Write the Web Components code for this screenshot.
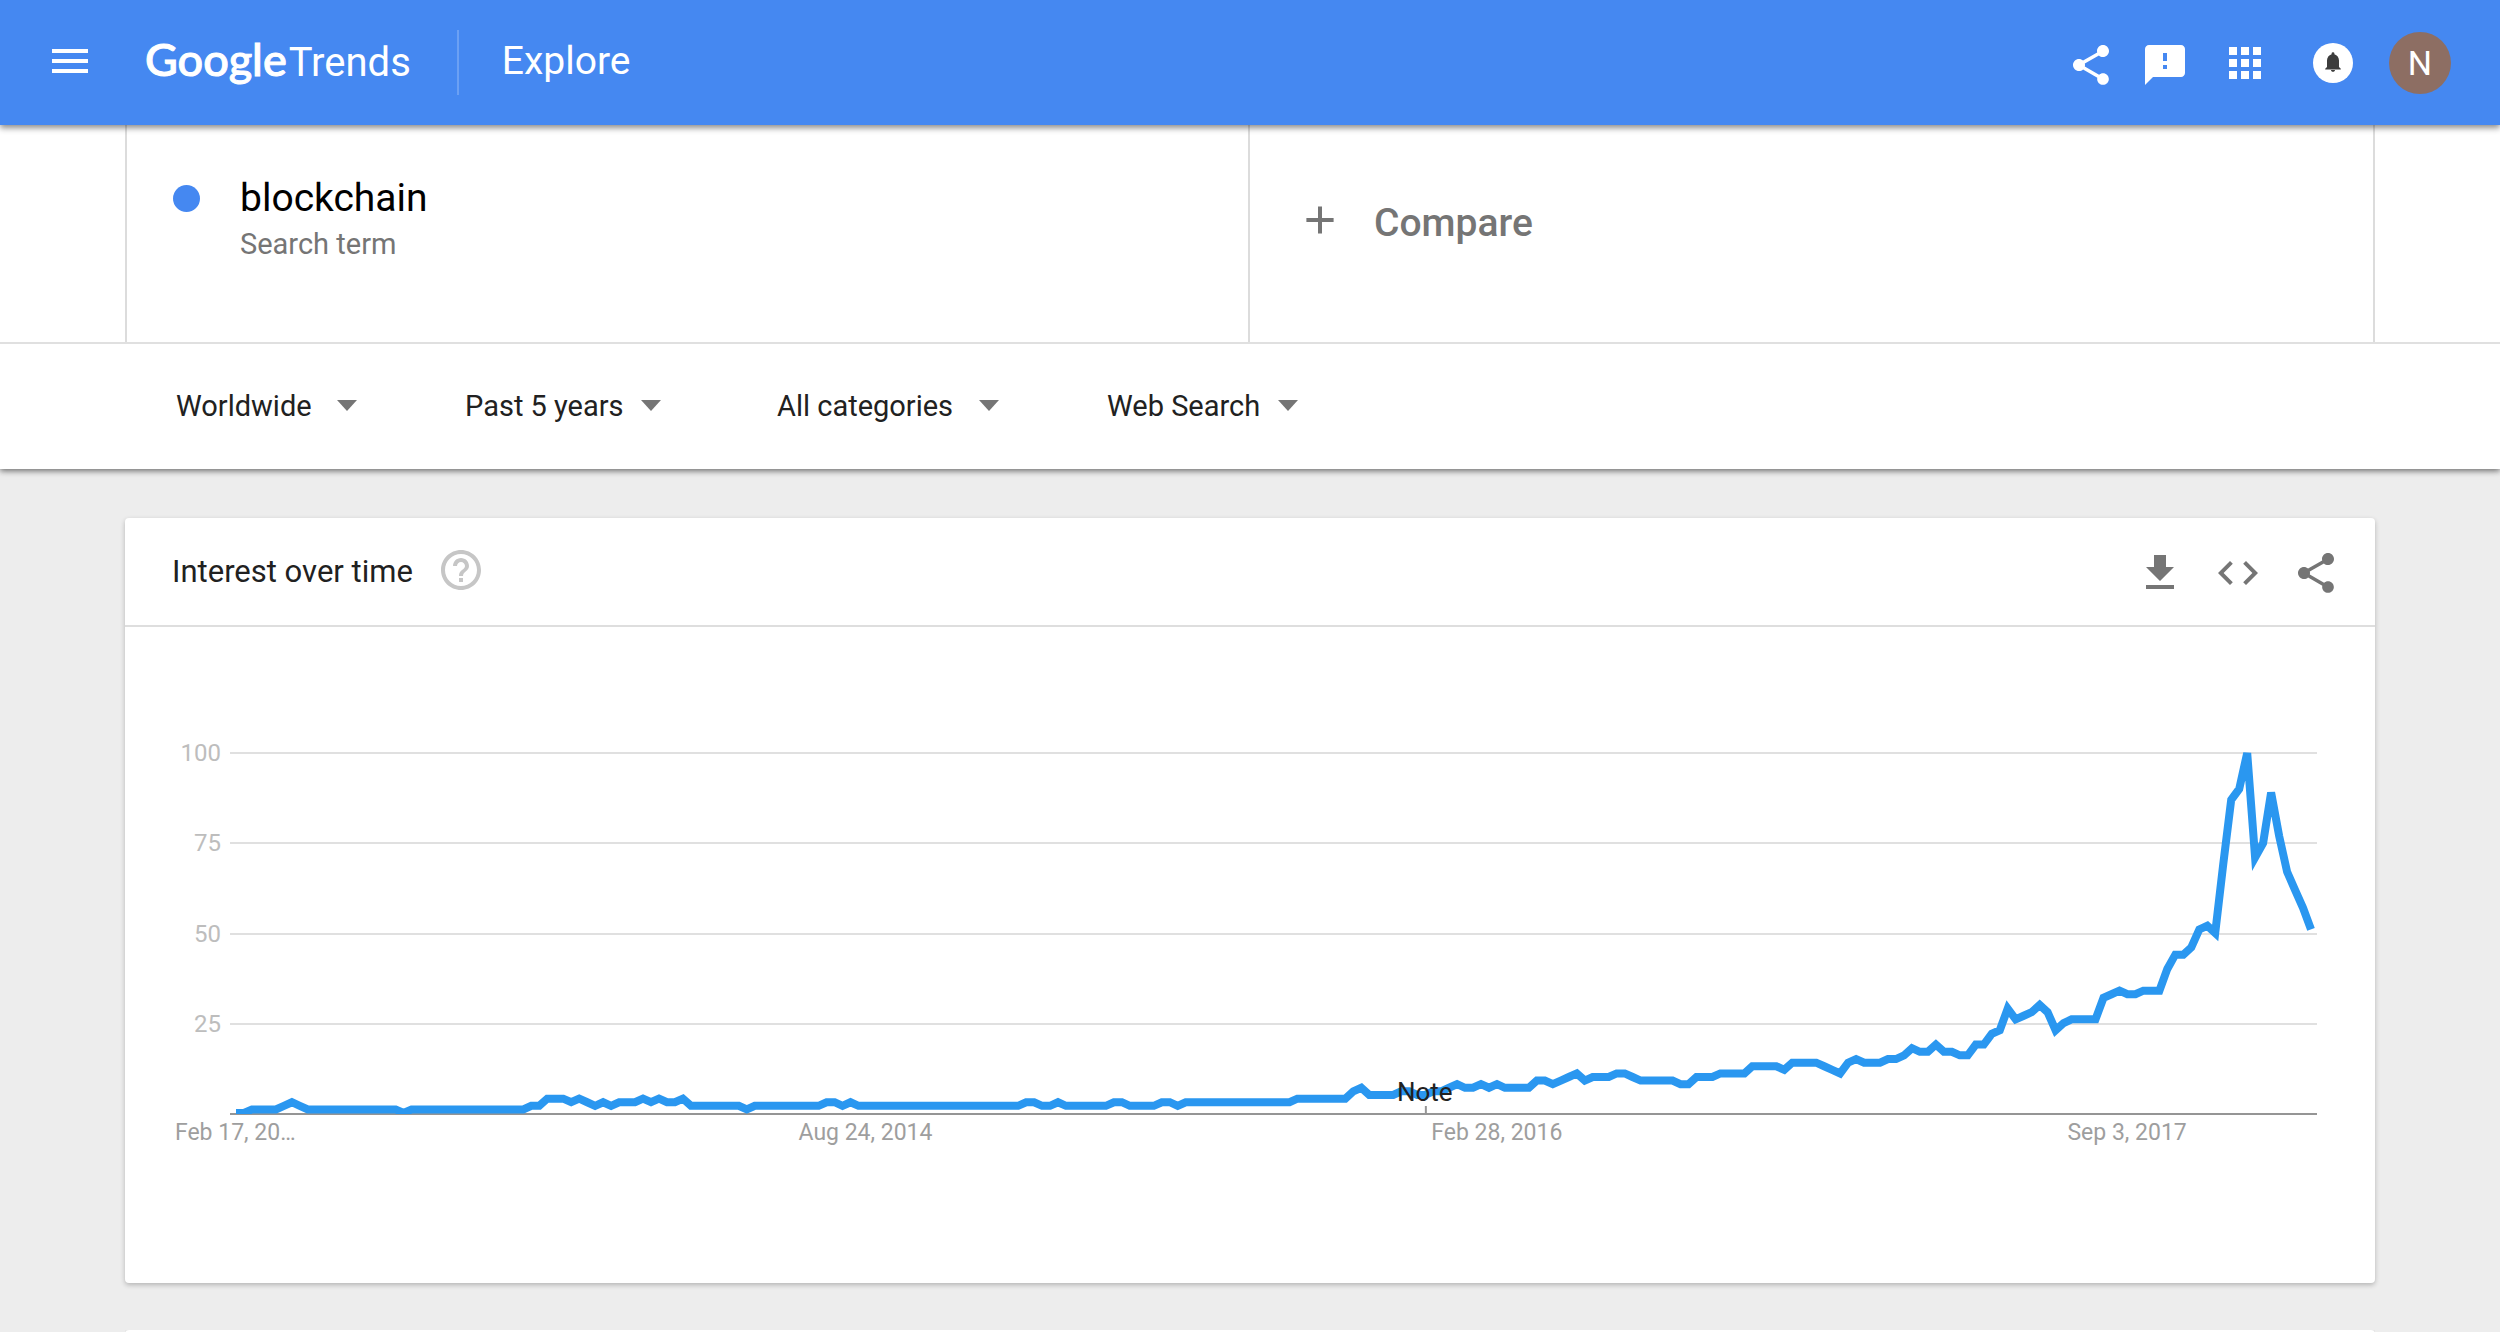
<!DOCTYPE html>
<html lang="en">
<head>
<meta charset="utf-8">
<title>blockchain - Explore - Google Trends</title>
<style>
  html, body { margin: 0; background: #ededed; }
  body { font-family: Roboto, "Liberation Sans", sans-serif; color: #212121; }
</style>
</head>
<body>
<trends-page></trends-page>

<script>
const ICONS = {
  menu: '<path d="M3 18h18v-2H3v2zm0-5h18v-2H3v2zm0-7v2h18V6H3z"/>',
  share: '<path d="M18 16.080c-.76 0-1.440.3-1.960.77L8.910 12.700c.05-.23.09-.46.09-.7s-.04-.47-.09-.7l7.050-4.110c.54.5 1.250.81 2.040.81 1.660 0 3-1.340 3-3s-1.340-3-3-3-3 1.340-3 3c0 .24.04.47.09.7L8.040 9.810C7.500 9.310 6.790 9 6 9c-1.660 0-3 1.340-3 3s1.340 3 3 3c.79 0 1.500-.31 2.040-.81l7.120 4.160c-.05.21-.08.43-.08.65 0 1.610 1.310 2.920 2.920 2.920s2.920-1.310 2.920-2.920-1.310-2.920-2.920-2.920z"/>',
  feedback: '<path d="M20 2H4c-1.100 0-2 .9-2 2v18l4-4h14c1.100 0 2-.9 2-2V4c0-1.100-.9-2-2-2zm-7 12h-2v-2h2v2zm0-4h-2V6h2v4z"/>',
  apps: '<path d="M4 8h4V4H4v4zm6 12h4v-4h-4v4zm-6 0h4v-4H4v4zm0-6h4v-4H4v4zm6 0h4v-4h-4v4zm6-10v4h4V4h-4zm-6 4h4V4h-4v4zm6 6h4v-4h-4v4zm0 6h4v-4h-4v4z"/>',
  bell: '<circle cx="12" cy="12" r="10"/><path fill="#3c3c3c" d="M12 16.400c.6 0 1-.4 1-.9h-2c0 .5.4.9 1 .9zm3-2.400v-3.200c0-1.600-.9-2.800-2.300-3.200v-.3a.7.7 0 0 0-1.400 0v.3C9.900 8 9 9.200 9 10.800V14l-.9.900v.4h7.800v-.4z"/>',
  plus: '<path d="M18.800 13h-5.800v5.800h-2V13H5.200v-2H11V5.200h2V11h5.800z"/>',
  help: '<path d="M11 18h2v-2h-2v2zm1-16C6.480 2 2 6.480 2 12s4.480 10 10 10 10-4.480 10-10S17.520 2 12 2zm0 18c-4.410 0-8-3.590-8-8s3.590-8 8-8 8 3.590 8 8-3.590 8-8 8zm0-14c-2.210 0-4 1.790-4 4h2c0-1.100.9-2 2-2s2 .9 2 2c0 2-3 1.750-3 5h2c0-2.250 3-2.500 3-5 0-2.210-1.790-4-4-4z"/>',
  download: '<path d="M19 9h-4V3H9v6H5l7 7 7-7zM5 18v2h14v-2H5z"/>',
  code: '<path d="M9.400 16.600L4.800 12l4.600-4.600L8 6l-6 6 6 6 1.400-1.400zm5.200 0l4.600-4.600-4.600-4.600L16 6l6 6-6 6-1.400-1.400z"/>'
};

const RESET = `
  *, *::before { box-sizing: border-box; }
  button, select { margin: 0; padding: 0; border: 0; background: none; color: inherit; font: inherit; cursor: pointer; }
`;

function define(name, styles, markup, setup) {
  const template = document.createElement('template');
  template.innerHTML = `<style>${RESET}${styles}</style>${markup}`;
  customElements.define(name, class extends HTMLElement {
    constructor() {
      super();
      this.attachShadow({ mode: 'open' }).append(template.content.cloneNode(true));
    }
    connectedCallback() {
      if (setup) setup(this, this.shadowRoot);
    }
  });
}

define('t-icon', `
  :host { display: block; width: 48px; height: 48px; flex: none; }
  svg { display: block; width: 100%; height: 100%; fill: currentColor; }
`, '<svg viewBox="0 0 24 24" aria-hidden="true"></svg>', (host, root) => {
  root.querySelector('svg').innerHTML = ICONS[host.getAttribute('name')];
});

define('icon-button', `
  :host { display: block; flex: none; }
  button { display: block; }
`, '<button type="button"></button>', (host, root) => {
  const button = root.querySelector('button');
  const icon = document.createElement('t-icon');
  icon.setAttribute('name', host.getAttribute('icon'));
  button.setAttribute('aria-label', host.getAttribute('label'));
  button.replaceChildren(icon);
});

define('trends-header', `
  :host { display: block; position: relative; z-index: 2; background: #4588f1; color: #fff;
          box-shadow: 0 3px 6px rgba(0,0,0,.45); }
  header { display: flex; align-items: center; height: 125px; padding: 0 49px 0 46px; }
  .start { display: flex; align-items: center; flex: 1; }
  .start > * { padding-bottom: 3px; }
  .logo { display: flex; align-items: baseline; gap: 2px; margin-left: 51px; color: inherit; text-decoration: none; line-height: 56px; }
  .google { font-family: Lato, sans-serif; font-weight: 500; font-size: 45px; -webkit-text-stroke: 1px currentColor; }
  .trends { font-size: 40px; }
  h1 { margin: 0 0 0 46px; padding-left: 43px; border-left: 2px solid #6ba0f4; font-size: 39px; font-weight: 400; line-height: 62px; }
  .tools { display: flex; align-items: center; gap: 32px; }
  .pair { display: flex; gap: 26px; padding-top: 4px; }
  .bell { margin-left: 8px; }
  .avatar { width: 62px; height: 62px; border-radius: 50%; background: #8d6e63; font-size: 34px; line-height: 62px; text-align: center; }
`, `
  <header>
    <div class="start">
      <icon-button icon="menu" label="Main menu"></icon-button>
      <a class="logo" href="#"><span class="google">Google</span><span class="trends">Trends</span></a>
      <h1>Explore</h1>
    </div>
    <div class="tools">
      <div class="pair">
        <icon-button icon="share" label="Share"></icon-button>
        <icon-button icon="feedback" label="Send feedback"></icon-button>
      </div>
      <icon-button icon="apps" label="Google apps"></icon-button>
      <icon-button class="bell" icon="bell" label="Notifications"></icon-button>
      <button class="avatar" type="button" aria-label="Account N">N</button>
    </div>
  </header>
`);

define('search-terms', `
  :host { display: block; position: relative; z-index: 1; padding: 0 5%; background: #fff; border-bottom: 2px solid #e0e0e0; }
  .row { display: grid; grid-template-columns: 1fr 1fr; height: 217px; border: solid #dcdcdc; border-width: 0 2px; }
  .term { display: flex; align-items: flex-start; gap: 40px; padding: 49px 46px; border-right: 2px solid #dcdcdc; }
  .dot { width: 27px; height: 27px; margin-top: 11px; border-radius: 50%; background: #4588f1; }
  .name { color: #000; font-size: 39px; line-height: 48px; }
  .kind { color: #757575; font-size: 29px; line-height: 44px; }
  .compare { display: flex; align-items: flex-start; gap: 30px; padding: 71px 46px; color: #757575;
             font-size: 39px; font-weight: 500; line-height: 54px; }
`, `
  <div class="row">
    <div class="term">
      <span class="dot"></span>
      <div>
        <div class="name">blockchain</div>
        <div class="kind">Search term</div>
      </div>
    </div>
    <button class="compare" type="button"><t-icon name="plus"></t-icon>Compare</button>
  </div>
`);

define('filter-select', `
  :host { display: flex; align-items: center; gap: 25px; }
  :host([snug]) { gap: 17px; padding-right: 8px; }
  select { appearance: none; color: #212121; font-size: 29px; line-height: 40px; }
  svg { width: 20px; height: 11px; fill: #757575; }
`, `
  <select></select>
  <svg viewBox="0 0 20 11" aria-hidden="true"><path d="M0 0h20L10 11z"/></svg>
`, (host, root) => {
  const select = root.querySelector('select');
  select.setAttribute('aria-label', host.getAttribute('label'));
  select.replaceChildren(new Option(host.getAttribute('value')));
});

define('filter-bar', `
  :host { display: flex; align-items: center; gap: 108px; box-sizing: border-box; height: 125px; padding: 0 calc(5% + 51px) 2px;
          position: relative; background: #fff; box-shadow: 0 2px 6px rgba(0,0,0,.55); }
`, `
  <filter-select label="Region" value="Worldwide"></filter-select>
  <filter-select label="Time range" value="Past 5 years" snug></filter-select>
  <filter-select label="Category" value="All categories"></filter-select>
  <filter-select label="Search property" value="Web Search" snug></filter-select>
`);

define('trends-card', `
  :host { display: block; background: #fff; border-radius: 4px; box-shadow: 0 2px 5px rgba(0,0,0,.24); }
  header { display: flex; align-items: center; height: 109px; padding: 0 35px 0 47px; border-bottom: 2px solid #dedede; }
  h2 { margin: 0; color: #212121; font-size: 31px; font-weight: 400; line-height: 40px; }
  .help { margin: 0 auto 0 24px; padding-bottom: 3px; color: #c6c6c6; }
  .actions { display: flex; gap: 30px; padding-top: 2px; color: #757575; }
`, `
  <header>
    <h2><slot name="title"></slot></h2>
    <icon-button class="help" icon="help" label="Help"></icon-button>
    <div class="actions">
      <icon-button icon="download" label="Download CSV"></icon-button>
      <icon-button icon="code" label="Embed"></icon-button>
      <icon-button icon="share" label="Share chart"></icon-button>
    </div>
  </header>
  <slot></slot>
`);

/* Weekly interest values as [value, number of weeks] runs, starting Feb 17, 2013. */
const RUNS = [
  [0,2],[1,4],[2,1],[3,1],[2,1],[1,12],[0,1],[1,15],[2,2],[4,3],[3,1],[4,1],[3,1],[2,1],[3,1],[2,1],
  [3,3],[4,1],[3,1],[4,1],[3,2],[4,1],[2,7],[1,1],[2,9],[3,2],[2,1],[3,1],[2,21],[3,2],[2,2],[3,1],
  [2,6],[3,2],[2,4],[3,2],[2,1],[3,14],[4,7],[6,1],[7,1],[5,4],[6,2],[5,2],[6,2],[7,1],[8,1],[7,2],
  [8,1],[7,1],[8,1],[7,4],[9,2],[8,1],[9,1],[10,1],[11,1],[9,1],[10,3],[11,2],[10,1],[9,5],[8,2],
  [10,3],[11,4],[13,4],[12,1],[14,4],[13,1],[12,1],[11,1],[14,1],[15,1],[14,3],[15,2],[16,1],[18,1],
  [17,2],[19,1],[17,2],[16,2],[19,2],[22,1],[23,1],[29,1],[26,1],[27,1],[28,1],[30,1],[28,1],[23,1],
  [25,1],[26,4],[32,1],[33,1],[34,1],[33,2],[34,3],[40,1],[44,2],[46,1],[51,1],[52,1],[50,1],[69,1],
  [87,1],[90,1],[100,1],[71,1],[75,1],[89,1],[77,1],[67,1],[62,1],[57,1],[51,1]
];
const WEEKS = RUNS.flatMap(([value, count]) => Array(count).fill(value));

define('timeline-chart', `
  :host { display: block; padding: 126px 58px 168px 105px; }
  svg { display: block; width: 100%; height: 362px; overflow: visible; }
  .plot { overflow: hidden; height: auto; }
  .grid { stroke: #e0e0e0; stroke-width: 2; }
  .base { stroke: #959595; stroke-width: 2; }
  .series { fill: none; stroke: #2a97f0; stroke-width: 8; vector-effect: non-scaling-stroke; }
  text { font-size: 23px; fill: #9e9e9e; text-anchor: middle; }
  .value { font-size: 24px; fill: #bdbdbd; text-anchor: end; }
  .note { font-size: 26px; fill: #212121; }
`, `
  <svg role="img" aria-label="Interest over time for blockchain">
    <g class="grid">
      <line x2="100%" y1="0" y2="0"/><line x2="100%" y1="90" y2="90"/>
      <line x2="100%" y1="181" y2="181"/><line x2="100%" y1="271" y2="271"/>
    </g>
    <line class="base" x2="100%" y1="361" y2="361"/>
    <line class="base" x1="57.300%" x2="57.300%" y1="353" y2="361"/>
    <svg class="plot" y="-1" width="100%" height="363" viewBox="0 -1 2087 363" preserveAspectRatio="none">
      <path class="series"/>
    </svg>
    <text class="value" x="-9" y="8">100</text>
    <text class="value" x="-9" y="98">75</text>
    <text class="value" x="-9" y="189">50</text>
    <text class="value" x="-9" y="279">25</text>
    <text x="0.250%" y="387">Feb 17, 20…</text>
    <text x="30.450%" y="387">Aug 24, 2014</text>
    <text x="60.700%" y="387">Feb 28, 2016</text>
    <text x="90.900%" y="387">Sep 3, 2017</text>
    <text class="note" x="57.250%" y="348">Note</text>
  </svg>
`, (host, root) => {
  const step = 2075 / (WEEKS.length - 1);
  root.querySelector('.series').setAttribute('d', 'M' + WEEKS
    .map((value, week) => `${(6 + week * step).toFixed(1)} ${(361 - value * 3.61).toFixed(1)}`)
    .join('L'));
});

define('trends-page', `
  :host { display: block; min-height: 100vh; overflow-x: hidden; }
  main { display: flex; flex-direction: column; gap: 47px; padding: 49px 5% 0; }
  .next { height: 300px; background: #fff; border-radius: 4px; box-shadow: 0 2px 5px rgba(0,0,0,.24); }
  .fold { height: 2px; overflow: hidden; }
`, `
  <trends-header></trends-header>
  <search-terms></search-terms>
  <filter-bar></filter-bar>
  <main>
    <trends-card>
      <span slot="title">Interest over time</span>
      <timeline-chart></timeline-chart>
    </trends-card>
    <section class="fold"><div class="next"></div></section>
  </main>
`);
</script>
</body>
</html>
